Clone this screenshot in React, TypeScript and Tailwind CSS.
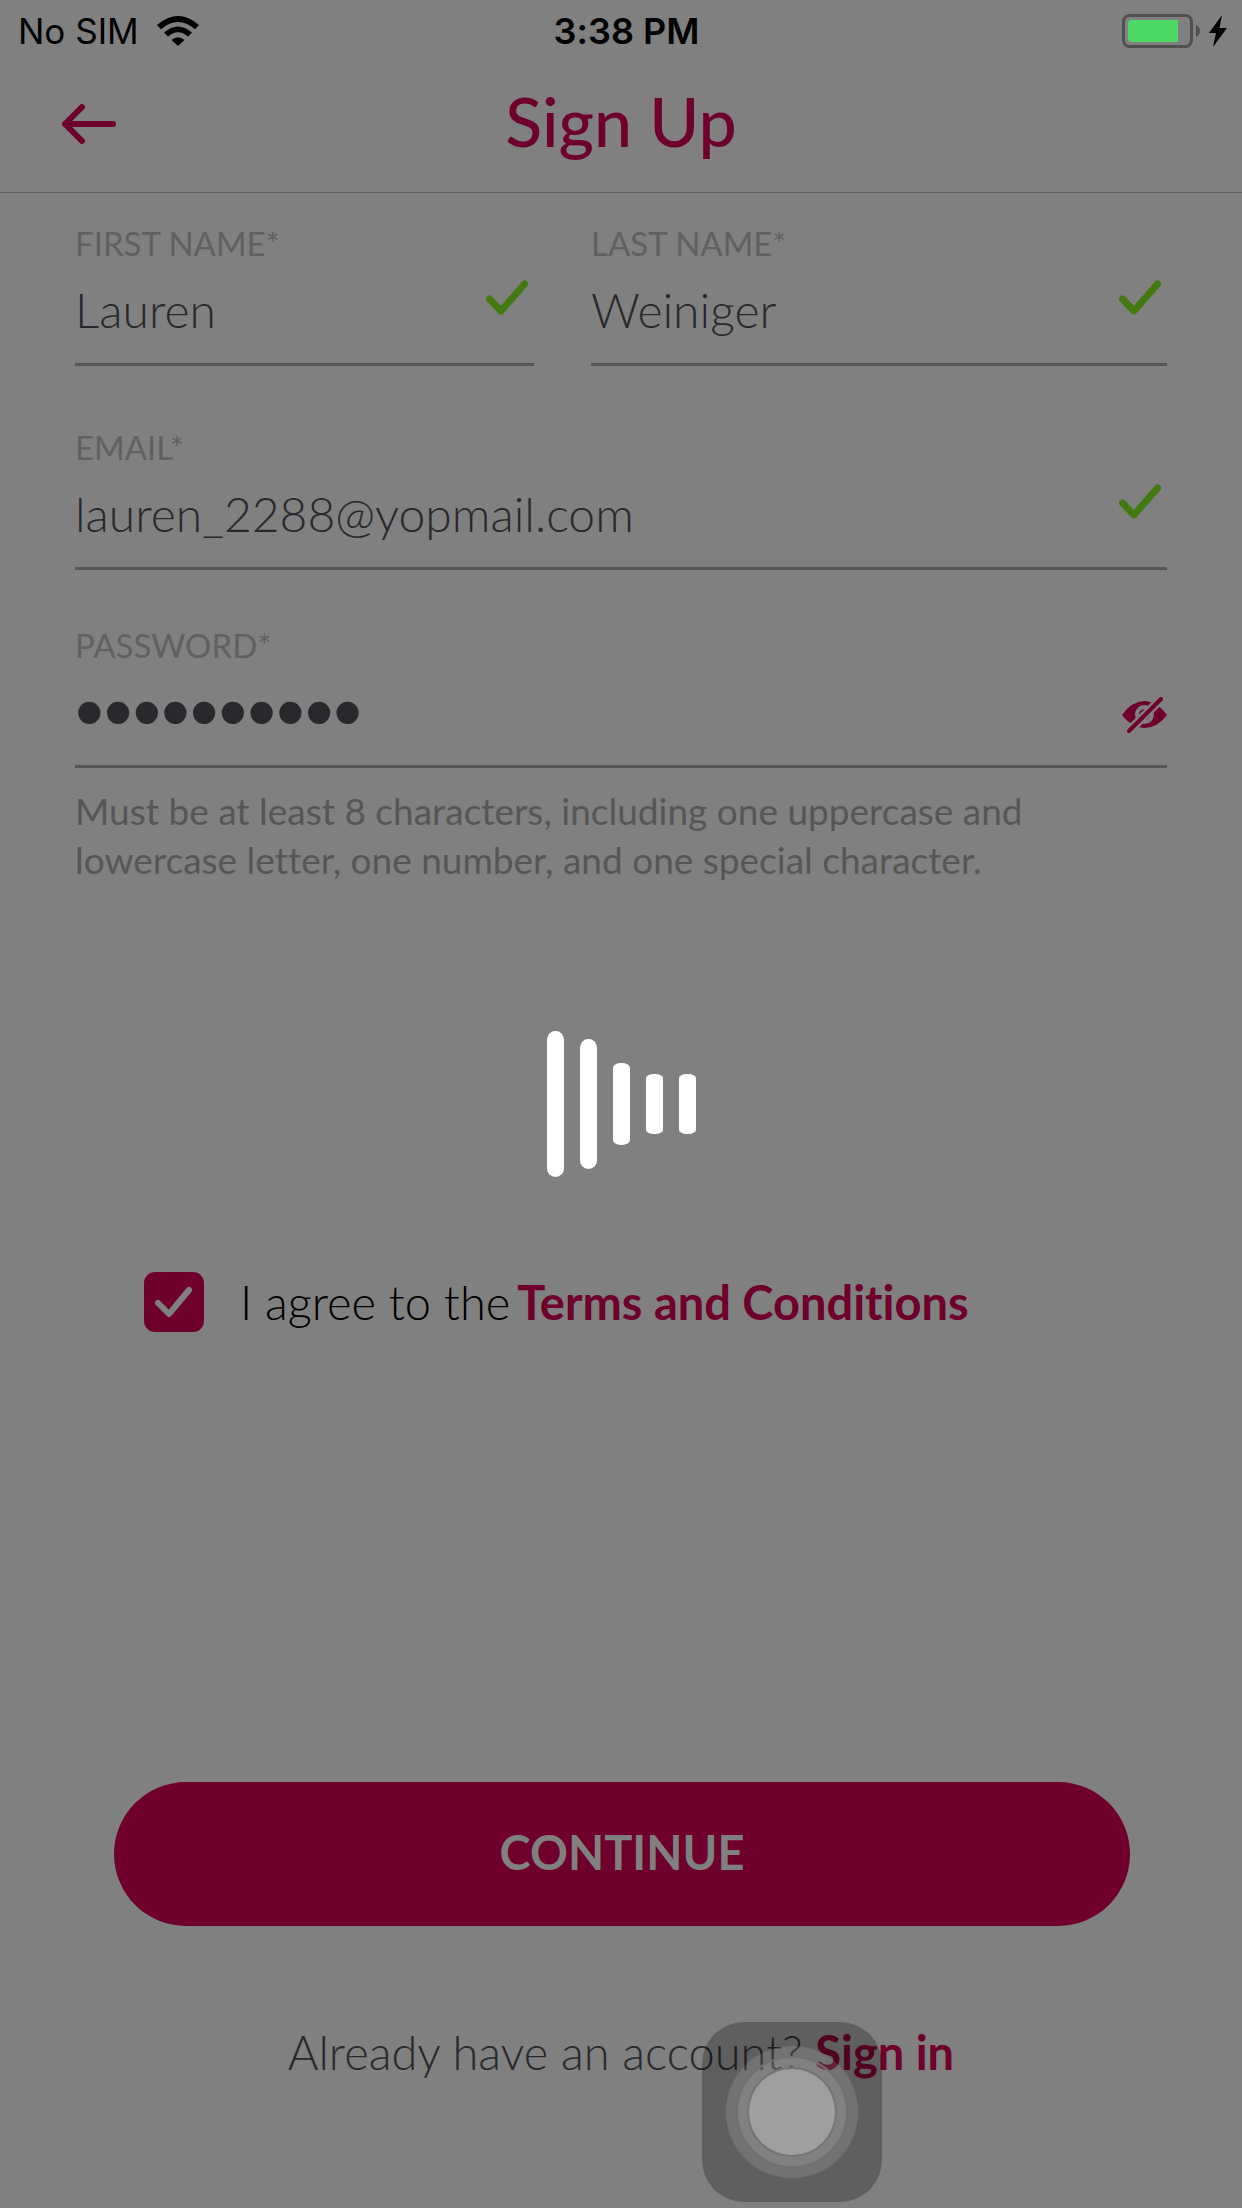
import { useState, type ReactNode } from "react";

function Tick() {
  return (
    <svg viewBox="0 0 42 36" className="mr-[6px] mb-[30px] h-[36px] w-[42px] text-[#437a10]" fill="none" aria-hidden="true">
      <path d="M3.5 19 L15 31 L38.5 4" stroke="currentColor" strokeWidth="7" strokeLinecap="round" strokeLinejoin="round" />
    </svg>
  );
}

function StatusBar() {
  return (
    <div className="flex h-[62px] items-center justify-between pr-[15px] pl-[18px] font-[Inter,sans-serif] text-[35px] leading-[40px] text-black">
      <div className="flex flex-1 items-center gap-[18px]">
        <span>No SIM</span>
        <svg viewBox="0 0 42 30" className="h-[30px] w-[42px]" aria-label="Wi-Fi">
          <path d="M0 9 Q21 -9 42 9 L38 13.300 Q21 -1.500 4 13.300 Z" fill="currentColor" />
          <path d="M7 16.500 Q21 4.500 35 16.500 L31 20.500 Q21 12 11 20.500 Z" fill="currentColor" />
          <path d="M14.500 24 Q21 18.500 27.500 24 L21 30 Z" fill="currentColor" />
        </svg>
      </div>
      <span className="pl-2 text-[36px] font-semibold">3:38 PM</span>
      <div className="flex flex-1 justify-end">
        <svg viewBox="0 0 105 34" className="h-[34px] w-[105px]" aria-label="Battery charging">
          <rect x="1.500" y="1.500" width="68" height="31" rx="6" fill="none" stroke="#4f4f4f" strokeWidth="3" />
          <path d="M10 6 H56 V28 H10 Q6 28 6 24 V10 Q6 6 10 6 Z" fill="#4cd964" />
          <path d="M74 11 Q78 13 78 17 Q78 21 74 23 Z" fill="#4f4f4f" />
          <path d="M100 1 L87 19 H94 L91 33 L105 14 H97.500 Z" fill="#000" />
        </svg>
      </div>
    </div>
  );
}

type FieldProps = {
  id: string;
  label: string;
  type: string;
  initial: string;
  className?: string;
  inputClassName?: string;
  children: ReactNode;
};

function Field({ id, label, type, initial, className = "", inputClassName = "text-[48px]", children }: FieldProps) {
  const [value, setValue] = useState(initial);
  return (
    <div className={`flex flex-col border-b-3 border-[#565656] ${className}`}>
      <label htmlFor={id} className="text-[33px] leading-[40px] text-[#606062]">
        {label}
      </label>
      <div className="flex items-center">
        <input
          id={id}
          type={type}
          value={value}
          onChange={(e) => setValue(e.target.value)}
          className={`mb-[8px] h-[92px] w-full min-w-0 flex-1 bg-transparent font-light text-[#29292d] outline-none ${inputClassName}`}
        />
        {children}
      </div>
    </div>
  );
}

const bars = [
  "h-[146px] rounded-full",
  "h-[130px] rounded-full",
  "h-[82px] rounded-[8px/5px]",
  "h-[60px] rounded-[8px/4px]",
  "h-[60px] rounded-[8px/4px]",
];

export default function App() {
  const [agreed, setAgreed] = useState(true);
  return (
    <div className="relative flex min-h-screen flex-col bg-[#808080] font-[Lato,sans-serif] [font-variant-ligatures:none]">
      <StatusBar />
      <header className="grid h-[131px] grid-cols-[1fr_auto_1fr] items-center border-b border-[#5c5c5c] px-[61px] pb-[6px] text-[#6e002b]">
        <button type="button" aria-label="Back" className="w-fit">
          <svg viewBox="0 0 56 42" className="h-[42px] w-[56px]" fill="none">
            <path d="M21 4 L4 21 L21 38 M4 21 H52" stroke="currentColor" strokeWidth="6" strokeLinecap="round" strokeLinejoin="round" />
          </svg>
        </button>
        <h1 className="pb-[6px] text-[68px] leading-[80px] font-medium">Sign Up</h1>
      </header>

      <form className="flex flex-1 flex-col px-[75px]" onSubmit={(e) => e.preventDefault()}>
        <div className="mt-[30px] flex gap-[57px]">
          <Field id="first" label="FIRST NAME*" type="text" initial="Lauren" className="flex-[459]">
            <Tick />
          </Field>
          <Field id="last" label="LAST NAME*" type="text" initial="Weiniger" className="flex-[576]">
            <Tick />
          </Field>
        </div>
        <Field id="email" label="EMAIL*" type="email" initial="lauren_2288@yopmail.com" className="mt-[61px]">
          <Tick />
        </Field>
        <Field
          id="password"
          label="PASSWORD*"
          type="password"
          initial="Abcdef123!"
          className="mt-[55px]"
          inputClassName="font-['Liberation_Sans',sans-serif] text-[82px]"
        >
          <button type="button" aria-label="Show password">
            <svg viewBox="0 0 45 36" className="h-[36px] w-[45px] text-[#6e002b]">
              <path d="M0 18 Q10 4 22.500 4 Q35 4 45 18 Q35 31 22.500 31 Q10 31 0 18 Z" fill="currentColor" />
              <circle cx="22.500" cy="17.500" r="9.500" fill="#808080" />
              <circle cx="22.500" cy="17.500" r="5.500" fill="currentColor" />
              <path d="M7 34 L39 2" stroke="#808080" strokeWidth="9" />
              <path d="M7 34 L39 2" stroke="currentColor" strokeWidth="4" strokeLinecap="round" />
            </svg>
          </button>
        </Field>
        <p className="mt-[18px] text-[37px] leading-[49px] text-[#565656]">
          Must be at least 8 characters, including one uppercase and lowercase letter, one number, and one special character.
        </p>

        <div className="mt-[388px] ml-[69px] flex items-center">
          <span className="relative flex">
            <input
              id="agree"
              type="checkbox"
              checked={agreed}
              onChange={(e) => setAgreed(e.target.checked)}
              className="size-[60px] appearance-none rounded-[11px] bg-[#6e002b]"
            />
            {agreed && (
              <svg viewBox="0 0 60 60" className="pointer-events-none absolute inset-0" fill="none" aria-hidden="true">
                <path d="M14 31 L25 42 L45 18" stroke="#808080" strokeWidth="6" strokeLinecap="round" strokeLinejoin="round" />
              </svg>
            )}
          </span>
          <label htmlFor="agree" className="ml-[36px] text-[47px] leading-[60px] font-light text-black">
            I agree to the
          </label>
          <a href="#terms" className="ml-[7px] text-[47px] leading-[60px] font-bold text-[#6e002b]">
            Terms and Conditions
          </a>
        </div>

        <button type="submit" className="mr-[37px] ml-[39px] mt-[450px] h-[144px] rounded-full bg-[#6e002b] pb-[4px] text-[47px] font-bold text-[#808080]">
          CONTINUE
        </button>
        <p className="mt-[96px] text-center text-[47px] leading-[60px] font-light text-[#29292d]">
          Already have an account?{" "}
          <a href="#signin" className="font-bold text-[#6e002b]">
            Sign in
          </a>
        </p>
      </form>

      <div role="status" aria-label="Loading" className="pointer-events-none absolute inset-0 flex items-center justify-center gap-[16px]">
        {bars.map((shape, i) => (
          <span key={i} className={`w-[17px] bg-white ${shape}`} />
        ))}
      </div>
      <button
        type="button"
        aria-label="AssistiveTouch"
        className="absolute right-[360px] bottom-[6px] flex size-[180px] items-center justify-center rounded-[42px] bg-black/26"
      >
        <span className="flex size-[132px] items-center justify-center rounded-full bg-white/12">
          <span className="flex size-[112px] items-center justify-center rounded-full border-2 border-[#707070] bg-white/10">
            <span className="size-[90px] rounded-full border-2 border-[#757575] bg-[#9f9f9f]" />
          </span>
        </span>
      </button>
    </div>
  );
}
